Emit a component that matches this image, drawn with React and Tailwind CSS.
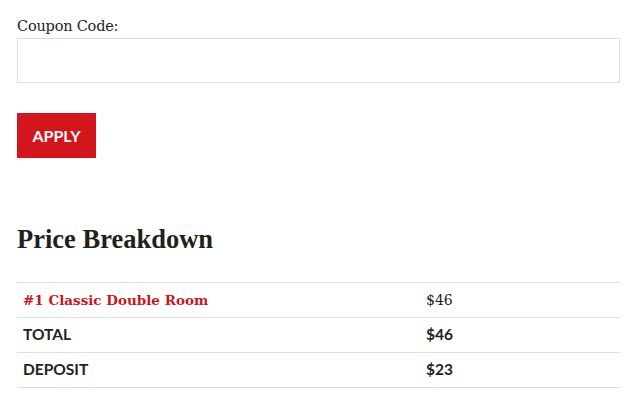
export default function App() {
  const rows = [
    { label: "#1 Classic Double Room", value: "$46", room: true },
    { label: "TOTAL", value: "$46" },
    { label: "DEPOSIT", value: "$23" },
  ];

  return (
    <div className="w-[638px] h-[408px] bg-white px-[17px] pt-[16px] text-[#222]">
      <label className="block font-['DejaVu_Serif',serif] text-[14.5px] leading-[21px] mb-[1px] tracking-[-0.2px]">
        Coupon Code:
      </label>
      <input
        type="text"
        className="block w-[603px] h-[45px] border border-[#dddddd] bg-white outline-none"
      />
      <button className="mt-[30px] w-[79px] h-[45px] bg-[#d2161c] text-white font-['Lato',sans-serif] font-bold text-[16px]">
        APPLY
      </button>

      <h2 className="mt-[64px] font-['Liberation_Serif',serif] font-bold text-[26.5px] leading-[34px] text-[#231f1c]">
        Price Breakdown
      </h2>

      <table className="mt-[26px] w-[603px] border-collapse">
        <tbody>
          {rows.map((r) => (
            <tr key={r.label} className="border-t border-b border-[#dddddd] h-[35px]">
              <td
                className={
                  r.room
                    ? "w-[403px] px-[6px] font-['DejaVu_Serif',serif] font-bold text-[13.5px] text-[#c8161d]"
                    : "w-[403px] px-[6px] font-['Lato',sans-serif] font-bold text-[15.5px] text-[#222]"
                }
              >
                {r.label}
              </td>
              <td
                className={
                  r.room
                    ? "px-[6px] font-['DejaVu_Serif',serif] text-[14px] text-[#222]"
                    : "px-[6px] font-['Lato',sans-serif] font-bold text-[15.5px] text-[#222]"
                }
              >
                {r.value}
              </td>
            </tr>
          ))}
        </tbody>
      </table>
    </div>
  );
}
